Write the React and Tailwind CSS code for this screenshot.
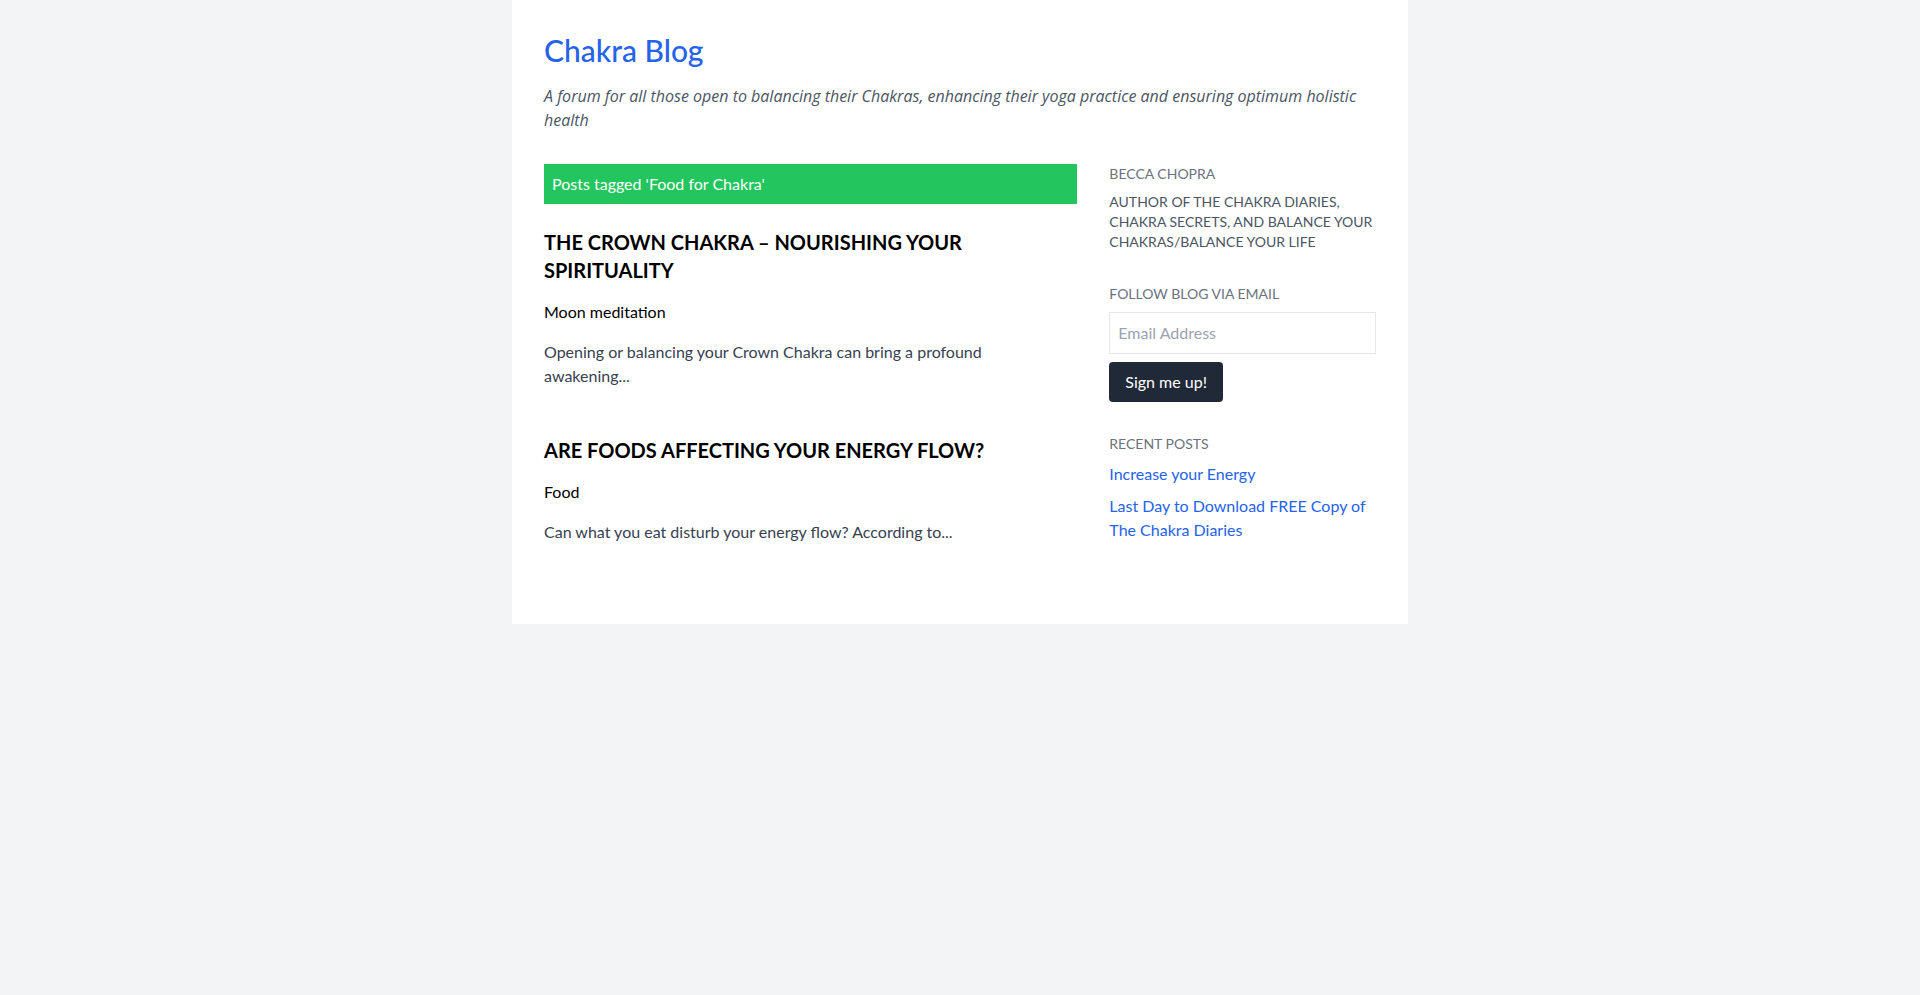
export default function App() {
  return (
    <div className="min-h-screen bg-[#f3f4f6]" style={{ fontFamily: 'Lato, "Open Sans", sans-serif' }}>
      <div className="mx-auto w-[896px] bg-white p-8">
        <header className="mb-8">
          <h1 className="text-3xl font-medium text-[#2563eb]">Chakra Blog</h1>
          <p className="mt-4 text-base italic text-[#4b5563] font-['Open_Sans',sans-serif]">
            A forum for all those open to balancing their Chakras, enhancing their yoga practice and ensuring optimum holistic health
          </p>
        </header>
        <div className="flex gap-8">
          <main className="w-2/3">
            <div className="mb-6 bg-[#22c55e] px-2 py-2 text-base text-white">Posts tagged 'Food for Chakra'</div>
            <article className="mb-12">
              <h2 className="mb-4 text-xl font-bold uppercase text-black">The Crown Chakra – Nourishing your Spirituality</h2>
              <p className="mb-4 text-base text-black">Moon meditation</p>
              <p className="pr-12 text-base text-[#374151]">Opening or balancing your Crown Chakra can bring a profound awakening...</p>
            </article>
            <article className="mb-12">
              <h2 className="mb-4 text-xl font-bold uppercase text-black">Are Foods Affecting Your Energy Flow?</h2>
              <p className="mb-4 text-base text-black">Food</p>
              <p className="text-base text-[#374151]">Can what you eat disturb your energy flow? According to...</p>
            </article>
          </main>
          <aside className="w-1/3">
            <div className="mb-8">
              <h3 className="mb-2 text-sm uppercase text-[#6b7280]">Becca Chopra</h3>
              <p className="text-sm uppercase text-[#4b5563]">
                Author of The Chakra Diaries, Chakra Secrets, and Balance Your Chakras/Balance Your Life
              </p>
            </div>
            <div className="mb-8">
              <h3 className="mb-2 text-sm uppercase text-[#6b7280]">Follow Blog via Email</h3>
              <input
                type="email"
                placeholder="Email Address"
                className="mb-2 block w-full border border-[#e5e7eb] px-2 py-2 text-base text-[#374151] placeholder-[#9ca3af] outline-none"
              />
              <button className="rounded bg-[#1f2937] px-4 py-2 text-base text-white">Sign me up!</button>
            </div>
            <div>
              <h3 className="mb-2 text-sm uppercase text-[#6b7280]">Recent Posts</h3>
              <ul className="space-y-2">
                <li><a href="#" className="text-base text-[#2563eb]">Increase your Energy</a></li>
                <li><a href="#" className="text-base text-[#2563eb]">Last Day to Download FREE Copy of The Chakra Diaries</a></li>
              </ul>
            </div>
          </aside>
        </div>
      </div>
    </div>
  );
}
